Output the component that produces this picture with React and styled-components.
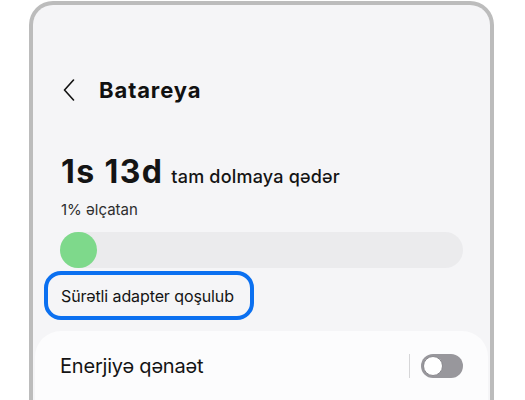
import React from "react";
import styled, { createGlobalStyle } from "styled-components";

const Global = createGlobalStyle`
  html, body { margin: 0; padding: 0; background: #ffffff; }
  body { font-family: Inter, "Noto Sans", Roboto, sans-serif; overflow: hidden; }
`;

const Page = styled.div`
  width: 525px;
  height: 400px;
  overflow: hidden;
  padding-top: 1px;
  box-sizing: border-box;
`;

const Phone = styled.div`
  margin-left: 29px;
  width: 465px;
  height: 420px;
  box-sizing: border-box;
  border: 4px solid #bcbcbc;
  border-bottom: none;
  border-radius: 24px 24px 0 0;
  background: #f5f5f7;
  display: flex;
  flex-direction: column;
`;

const Content = styled.div`
  padding: 0 27px;
  display: flex;
  flex-direction: column;
`;

const Header = styled.div`
  display: flex;
  align-items: center;
  height: 36px;
  margin-top: 67px;
  gap: 24px;
  padding-left: 3px;
`;

const Title = styled.h1`
  margin: 0;
  font-size: 22px;
  font-weight: 700;
  color: #111;
  letter-spacing: 0.9px;
`;

const TimeLine = styled.div`
  margin-top: 46px;
  padding-left: 1px;
  display: flex;
  align-items: baseline;
  gap: 8px;
  line-height: 36px;
  color: #141414;
`;

const Big = styled.span`
  font-size: 32px;
  font-weight: 700;
  letter-spacing: 1.4px;
`;

const Small = styled.span`
  font-size: 18px;
  font-weight: 500;
  letter-spacing: 0.2px;
`;

const Sub = styled.div`
  margin-top: 5px;
  padding-left: 1px;
  font-size: 15px;
  line-height: 20px;
  color: #2e2e2e;
`;

const Bar = styled.div`
  margin-top: 12px;
  height: 36px;
  border-radius: 18px;
  background: #ebebed;
  display: flex;
`;

const Level = styled.div`
  height: 36px;
  border-radius: 18px;
  background: #7ed98b;
`;

const Highlight = styled.div`
  align-self: flex-start;
  margin: 3px 0 0 -16px;
  border: 4px solid #0b70f0;
  border-radius: 17px;
  padding: 0 16px 0 13px;
  height: 41px;
  display: flex;
  align-items: center;
  font-size: 16px;
  letter-spacing: -0.1px;
  color: #141414;
`;

const Card = styled.div`
  margin: 11px 2px 0 2px;
  background: #fcfcfd;
  border-radius: 26px 26px 0 0;
  flex: 1;
  padding: 2px 25px 0;
`;

const Row = styled.div`
  display: flex;
  align-items: center;
  height: 66px;
`;

const Label = styled.div`
  flex: 1;
  font-size: 20px;
  letter-spacing: -0.2px;
  color: #141414;
`;

const Divider = styled.div`
  width: 1px;
  height: 24px;
  background: #d6d6d8;
  margin-right: 11px;
`;

const Switch = styled.div`
  width: 42px;
  height: 24px;
  border-radius: 12px;
  background: #98979c;
  display: flex;
  align-items: center;
  padding: 0 2px;
  box-sizing: border-box;
`;

const Knob = styled.div`
  width: 20px;
  height: 20px;
  border-radius: 50%;
  background: #fff;
  box-sizing: border-box;
  border: 1.5px solid #8a898e;
`;

function Chevron() {
  return (
    <svg width="12" height="22" viewBox="0 0 12 22">
      <path d="M10.5 1 L1.5 11 L10.5 21" fill="none" stroke="#111" strokeWidth="1.6" strokeLinecap="round" strokeLinejoin="round" />
    </svg>
  );
}

export default function App() {
  return (
    <Page>
      <Global />
      <Phone>
        <Content>
          <Header>
            <Chevron />
            <Title>Batareya</Title>
          </Header>
          <TimeLine>
            <Big>1s 13d</Big>
            <Small>tam dolmaya qədər</Small>
          </TimeLine>
          <Sub>1% əlçatan</Sub>
          <Bar>
            <Level style={{ width: 37 }} />
          </Bar>
          <Highlight>Sürətli adapter qoşulub</Highlight>
        </Content>
        <Card>
          <Row>
            <Label>Enerjiyə qənaət</Label>
            <Divider />
            <Switch>
              <Knob />
            </Switch>
          </Row>
        </Card>
      </Phone>
    </Page>
  );
}
